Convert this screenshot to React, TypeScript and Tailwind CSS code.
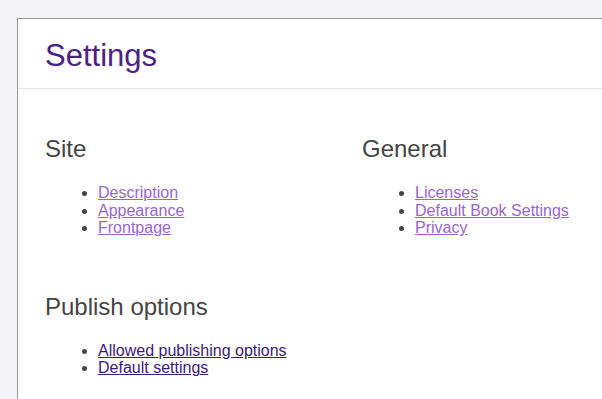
type Section = {
  title: string;
  links: { label: string; visited?: boolean }[];
};

const topSections: Section[] = [
  {
    title: "Site",
    links: [
      { label: "Description", visited: true },
      { label: "Appearance", visited: true },
      { label: "Frontpage", visited: true },
    ],
  },
  {
    title: "General",
    links: [
      { label: "Licenses", visited: true },
      { label: "Default Book Settings", visited: true },
      { label: "Privacy", visited: true },
    ],
  },
];

const publish: Section = {
  title: "Publish options",
  links: [{ label: "Allowed publishing options" }, { label: "Default settings" }],
};

function SettingsBlock({ section }: { section: Section }) {
  return (
    <div>
      <h2 className="text-[24px] leading-none font-normal text-[#444]">{section.title}</h2>
      <ul className="mt-[23px] list-disc pl-[53px] text-[16px] leading-[17.6px] text-[#444]">
        {section.links.map((link) => (
          <li key={link.label}>
            <a
              href="#"
              className={`underline ${link.visited ? "text-[#9966cc]" : "text-[#3b1a7a]"}`}
            >
              {link.label}
            </a>
          </li>
        ))}
      </ul>
    </div>
  );
}

export default function App() {
  return (
    <div
      className="min-h-[399px] bg-[#f4f3f8] pt-[18px] pl-[17px]"
      style={{ fontFamily: '"Liberation Sans", Arial, sans-serif' }}
    >
      <div className="min-h-[381px] border-t border-l border-[#999] bg-white">
        <header className="border-b border-[#e6e6e6] pt-[21px] pb-[17px] pl-[27px]">
          <h1 className="text-[31px] leading-none font-normal text-[#4a2283]">Settings</h1>
        </header>
        <div className="pt-[48px] pl-[27px]">
          <div className="grid grid-cols-[317px_1fr]">
            {topSections.map((s) => (
              <SettingsBlock key={s.title} section={s} />
            ))}
          </div>
          <div className="mt-[58px]">
            <SettingsBlock section={publish} />
          </div>
        </div>
      </div>
    </div>
  );
}
